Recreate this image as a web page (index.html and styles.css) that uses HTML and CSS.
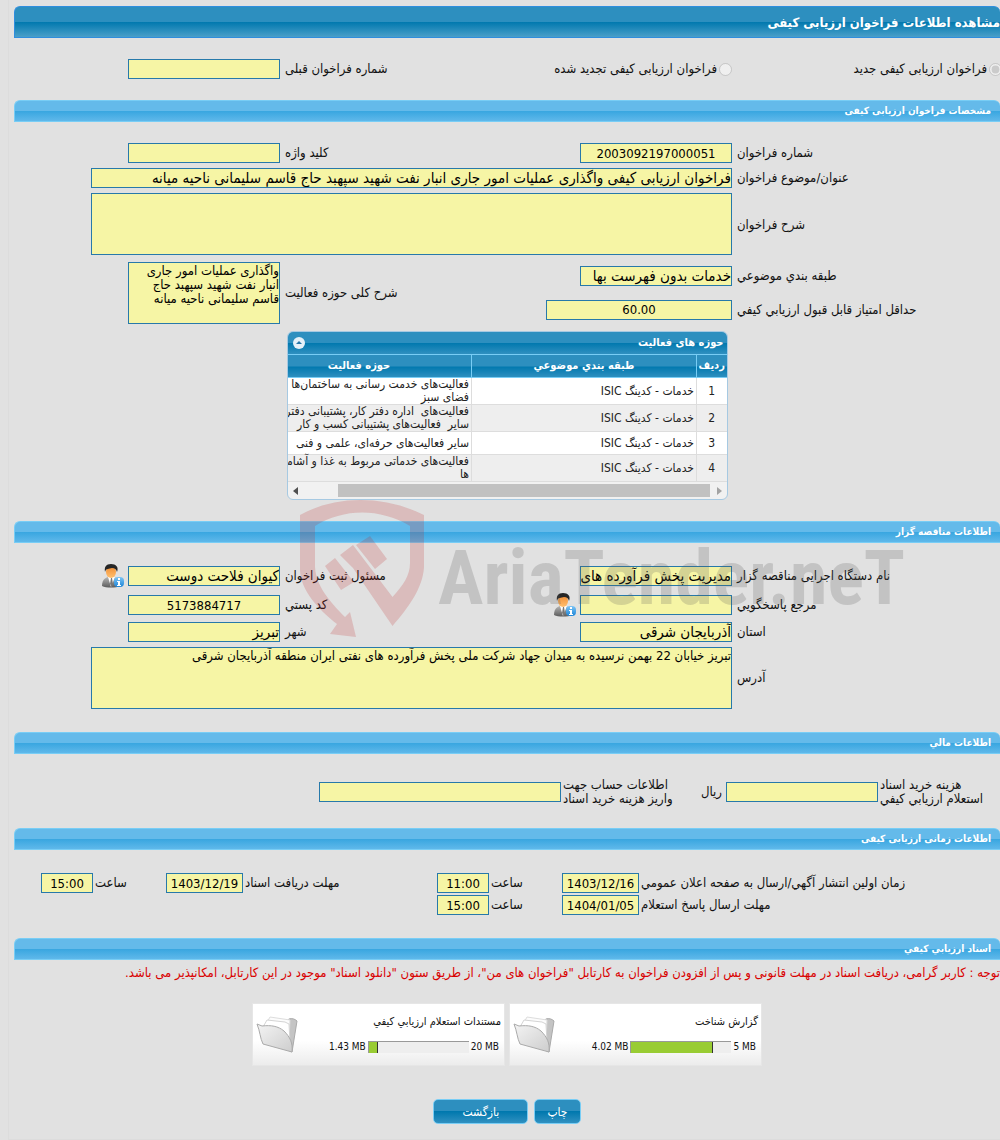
FILE: index.html
```
<!DOCTYPE html>
<html lang="fa" dir="rtl">
<head>
    <meta charset="UTF-8">
    <title>مشاهده اطلاعات فراخوان ارزیابی کیفی</title>
    <link rel="stylesheet" href="styles.css">
</head>
<body>
    <!-- shared icons -->
    <svg class="sprite" aria-hidden="true">
        <defs>
            <linearGradient id="skin" x1="0" y1="0" x2="0" y2="1">
                <stop offset="0" stop-color="#f08a30"/>
                <stop offset="1" stop-color="#ffc070"/>
            </linearGradient>
            <linearGradient id="suit" x1="0" y1="0" x2="0" y2="1">
                <stop offset="0" stop-color="#b5b5b5"/>
                <stop offset="1" stop-color="#5c5c5c"/>
            </linearGradient>
            <linearGradient id="info" x1="0" y1="0" x2="0" y2="1">
                <stop offset="0" stop-color="#7cc4f5"/>
                <stop offset="1" stop-color="#1e86d8"/>
            </linearGradient>
            <linearGradient id="paper" x1="0" y1="0" x2="1" y2="1">
                <stop offset="0" stop-color="#f4f4f4"/>
                <stop offset="1" stop-color="#cdcdcd"/>
            </linearGradient>
        </defs>
        <symbol id="person" viewBox="0 0 22 24">
            <path d="M0 22c0-5 2-8 6-9h6c4 1 6 4 6 9-4 2-14 2-18 0z" fill="url(#suit)"/>
            <path d="M6 13l3 10 4-10z" fill="#fff"/>
            <path d="M9 14l-1 6 2 3 1-3-1-6z" fill="#777"/>
            <ellipse cx="9" cy="8" rx="5" ry="6" fill="url(#skin)"/>
            <path d="M3 8c-1-5 1-8 6-8s8 3 6 8c-1-3-2-4-5-4-3 1-6 0-7 4z" fill="#262626"/>
            <rect x="12" y="13" width="10" height="10" rx="4" fill="url(#info)"/>
            <path d="M16 14h2v2h-2zM15 17h3v4h1v1h-4v-1h1v-3h-1z" fill="#fff"/>
        </symbol>
        <symbol id="folder" viewBox="0 0 42 38">
            <path d="M28 7l5-4c3-1 6 0 8 2l-5 31-4-2z" fill="#c4c4c4" stroke="#aaa"/>
            <path d="M9 10l5-9 20 3-1 20-6 2z" fill="#fcfcfc" stroke="#ddd"/>
            <path d="M7 11l4-7 18 2 4 2 1 18z" fill="#fff" stroke="#d4d4d4"/>
            <path d="M1 8l5 2c9-1 16 0 22 5 6 6 9 12 8 21L7 28C4 22 4 15 1 8z" fill="url(#paper)" stroke="#aaa"/>
        </symbol>
    </svg>

    <main class="page">
        <h1 class="title-bar">مشاهده اطلاعات فراخوان ارزیابی کیفی</h1>

        <div class="form-grid">
            <label class="radio first-radio"><input type="radio" name="kind" checked disabled>فراخوان ارزیابی کیفی جدید</label>
            <label class="radio wide-radio"><input type="radio" name="kind" disabled>فراخوان ارزیابی کیفی تجدید شده</label>
            <label class="lbl col-3" for="prevNo">شماره فراخوان قبلی</label>
            <input type="text" id="prevNo" readonly>
        </div>

        <h2 class="section-bar">مشخصات فراخوان ارزیابی کیفی</h2>
        <div class="form-grid specs">
            <label class="lbl" for="callNo">شماره فراخوان</label>
            <input type="text" id="callNo" class="num" value="2003092197000051" readonly>
            <label class="lbl" for="keyword">کلید واژه</label>
            <input type="text" id="keyword" readonly>

            <label class="lbl col-1" for="subject">عنوان/موضوع فراخوان</label>
            <input type="text" id="subject" class="full" value="فراخوان ارزیابی کیفی واگذاری عملیات امور جاری انبار نفت شهید سپهبد حاج قاسم سلیمانی ناحیه میانه" readonly>

            <label class="lbl col-1" for="descr">شرح فراخوان</label>
            <textarea id="descr" class="full descr" readonly></textarea>

            <label class="lbl col-1" for="category">طبقه بندي موضوعي</label>
            <input type="text" id="category" value="خدمات بدون فهرست بها" readonly>
            <label class="lbl two-rows" for="scope">شرح کلی حوزه فعالیت</label>
            <textarea id="scope" class="two-rows" readonly>واگذاری عملیات امور جاری انبار نفت شهید سپهبد حاج قاسم سلیمانی ناحیه میانه</textarea>

            <label class="lbl col-1" for="minScore">حداقل امتیاز قابل قبول ارزیابي کیفي</label>
            <input type="text" id="minScore" class="num score" value="60.00" readonly>
        </div>

        <!-- activity fields -->
        <section class="panel">
            <header class="panel-title">
                <span>حوزه های فعالیت</span>
                <button type="button" class="collapse" aria-label="بستن">
                    <svg viewBox="0 0 12 12"><circle cx="6" cy="6" r="6" fill="#e4f0f8"/><path d="M3 7l3-3 3 3z" fill="#2475a8"/></svg>
                </button>
            </header>
            <div class="panel-body">
                <table>
                    <thead>
                        <tr><th class="c-no">ردیف</th><th class="c-cat">طبقه بندي موضوعي</th><th class="c-field">حوزه فعالیت</th></tr>
                    </thead>
                    <tbody>
                        <tr><td class="c-no">1</td><td>خدمات - کدینگ ISIC</td><td>فعالیت‌های خدمت رسانی به ساختمان‌ها و<br>فضای سبز</td></tr>
                        <tr><td class="c-no">2</td><td>خدمات - کدینگ ISIC</td><td>فعالیت‌های &nbsp;اداره دفتر کار، پشتیبانی دفتر و<br>سایر &nbsp;فعالیت‌های پشتیبانی کسب و کار</td></tr>
                        <tr><td class="c-no">3</td><td>خدمات - کدینگ ISIC</td><td>سایر فعالیت‌های حرفه‌ای، علمی و فنی</td></tr>
                        <tr><td class="c-no">4</td><td>خدمات - کدینگ ISIC</td><td>فعالیت‌های خدماتی مربوط به غذا و آشامیدنی<br>ها</td></tr>
                    </tbody>
                </table>
            </div>
            <div class="scrollbar">
                <svg viewBox="0 0 5 8"><path d="M0 0l5 4-5 4z" fill="#a3a3a3"/></svg>
                <span class="thumb"></span>
                <svg viewBox="0 0 5 8"><path d="M5 0L0 4l5 4z" fill="#505050"/></svg>
            </div>
        </section>

        <h2 class="section-bar">اطلاعات مناقصه گزار</h2>
        <div class="form-grid owner">
            <label class="lbl" for="agency">نام دستگاه اجرایی مناقصه گزار</label>
            <input type="text" id="agency" value="مدیریت پخش فرآورده های نفتی منطقه" readonly>
            <label class="lbl" for="registrar">مسئول ثبت فراخوان</label>
            <input type="text" id="registrar" value="کیوان فلاحت دوست" readonly>
            <svg class="person"><use href="#person"/></svg>

            <label class="lbl col-1" for="contact">مرجع پاسخگويي</label>
            <input type="text" id="contact" readonly>
            <div class="with-icon">
                <svg class="person"><use href="#person"/></svg>
                <label class="lbl" for="postal">کد پستي</label>
            </div>
            <input type="text" id="postal" class="num" value="5173884717" readonly>

            <label class="lbl col-1" for="province">استان</label>
            <input type="text" id="province" value="آذربایجان شرقی" readonly>
            <label class="lbl" for="city">شهر</label>
            <input type="text" id="city" value="تبریز" readonly>

            <label class="lbl col-1" for="address">آدرس</label>
            <textarea id="address" class="full" readonly>تبریز خیابان 22 بهمن نرسیده به میدان جهاد شرکت ملی پخش فرآورده های نفتی ایران منطقه آذربایجان شرقی</textarea>

            <!-- site watermark -->
            <svg class="watermark" viewBox="0 0 610 140" aria-hidden="true">
                <g class="wm-shield">
                    <path fill-rule="evenodd" d="M4 15C40-5 88-5 128 15V67C127 88 112 108 96.500 126L57 68 44 55 57 45 96.500 97C107 85 114 76 114 63V26C84 8 48 8 19 26V67C20 86 34 102 49 117L54 112 60 137 34 134 41 124C22 109 5 91 4 70Z"/>
                    <path d="M29 66l10-8 19 24-13 8zM60 45l14-9 17 23-12 10z"/>
                </g>
                <text class="wm-text" direction="ltr" x="142" y="104">AriaTender.neT</text>
            </svg>
        </div>

        <h2 class="section-bar">اطلاعات مالي</h2>
        <div class="money-row">
            <label class="money-lbl" for="price">هزينه خرید اسناد<br>استعلام ارزيابي کيفي</label>
            <input type="text" id="price" readonly>
            <span class="unit">ریال</span>
            <label class="money-lbl" for="account">اطلاعات حساب جهت<br>واریز هزینه خرید اسناد</label>
            <input type="text" id="account" class="account" readonly>
        </div>

        <h2 class="section-bar">اطلاعات زمانی ارزیابی کیفی</h2>
        <div class="time-grid">
            <label class="lbl" for="pubDate">زمان اولین انتشار آگهي/ارسال به صفحه اعلان عمومي</label>
            <input type="text" id="pubDate" class="num" value="1403/12/16" readonly>
            <label class="lbl" for="pubTime">ساعت</label>
            <input type="text" id="pubTime" class="num" value="11:00" readonly>
            <label class="lbl" for="docDate">مهلت دریافت اسناد</label>
            <input type="text" id="docDate" class="num" value="1403/12/19" readonly>
            <label class="lbl" for="docTime">ساعت</label>
            <input type="text" id="docTime" class="num" value="15:00" readonly>

            <label class="lbl col-1" for="replyDate">مهلت ارسال پاسخ استعلام</label>
            <input type="text" id="replyDate" class="num" value="1404/01/05" readonly>
            <label class="lbl" for="replyTime">ساعت</label>
            <input type="text" id="replyTime" class="num" value="15:00" readonly>
        </div>

        <h2 class="section-bar">اسناد ارزيابي كيفي</h2>
        <p class="notice">توجه : کاربر گرامی، دریافت اسناد در مهلت قانونی و پس از افزودن فراخوان به کارتابل "فراخوان های من"، از طریق ستون "دانلود اسناد" موجود در این کارتابل، امکانپذیر می باشد.</p>

        <div class="files">
            <article class="file">
                <div class="file-info">
                    <span class="file-name">گزارش شناخت</span>
                    <div class="quota"><span dir="ltr">5 MB</span><div class="track"><div class="fill" style="width: 82%"></div></div><span dir="ltr">4.02 MB</span></div>
                </div>
                <svg class="folder"><use href="#folder"/></svg>
            </article>
            <article class="file">
                <div class="file-info">
                    <span class="file-name">مستندات استعلام ارزيابي کيفي</span>
                    <div class="quota"><span dir="ltr">20 MB</span><div class="track"><div class="fill" style="width: 9%"></div></div><span dir="ltr">1.43 MB</span></div>
                </div>
                <svg class="folder"><use href="#folder"/></svg>
            </article>
        </div>

        <div class="actions">
            <button type="button" class="btn">چاپ</button>
            <button type="button" class="btn back">بازگشت</button>
        </div>
    </main>
</body>
</html>
```
FILE: styles.css
```
* {
    box-sizing: border-box;
}

body {
    margin: 0;
    background: #e1e1e1;
    color: #111;
    font-family: "DejaVu Sans Condensed", "DejaVu Sans", sans-serif;
    font-size: 13px;
    line-height: 14px;
    overflow-x: hidden;
}

.sprite {
    position: absolute;
    width: 0;
    height: 0;
}

.page {
    margin-left: 8px;
    padding: 6px 0 15px 5px;
    border: 1px solid #dcdcdc;
    border-width: 0 0 1px 1px;
}

/* bars */
.title-bar,
.section-bar {
    margin: 0;
    color: #fff;
    font-weight: bold;
}
.title-bar {
    height: 32px;
    line-height: 31px;
    font-size: 13px;
    border: 1px solid #2f8ede;
    border-width: 1px 0 1px 1px;
    border-radius: 6px 6px 0 0;
    background: linear-gradient(#2d8fbf 50%, #0078ae 50%, #4a9fc9);
}
.section-bar {
    height: 22px;
    line-height: 20px;
    padding-right: 9px;
    font-size: 10px;
    border: 1px solid #78cdf5;
    border-width: 1px 0 1px 1px;
    border-radius: 6px 6px 0 0;
    background: linear-gradient(#64baea 50%, #38a6e0 50%, #5fb8ea);
}

/* fields */
input[type="text"],
textarea {
    display: block;
    width: 100%;
    margin: 0;
    border: 1px solid #2779aa;
    border-radius: 0;
    background: #f6f5a5;
    color: #000;
    font-family: inherit;
    outline: none;
}
input[type="text"] {
    height: 20px;
    padding: 0;
    font-size: 15px;
}
textarea {
    height: 62px;
    padding: 1px 0;
    font-size: 13px;
    line-height: 14px;
    resize: none;
    overflow: hidden;
}
input[type="text"].num {
    direction: ltr;
    text-align: center;
    font-size: 13px;
}
.lbl {
    padding-left: 5px;
    text-align: left;
}

.form-grid {
    position: relative;
    display: grid;
    grid-template-columns: 268px 152px minmax(0, 1fr) 152px 114px;
    align-items: center;
    row-gap: 5px;
    padding: 21px 0;
}
.col-1 {
    grid-column: 1;
}
.col-3 {
    grid-column: 3;
    grid-row: 1;
}
.full {
    grid-column: 2 / 6;
}
input.full,
textarea.full {
    width: calc(100% - 77px);
}
.descr {
    margin-bottom: 2px;
}
.two-rows {
    grid-row: span 2;
}
.specs {
    padding-bottom: 7px;
}
.owner {
    padding-bottom: 23px;
}
input.score {
    width: 186px;
}

.radio {
    display: flex;
    align-items: center;
    gap: 2px;
}
.radio input {
    width: 13px;
    height: 13px;
    margin: 0;
}
.first-radio {
    margin-right: -2px;
}
.wide-radio {
    grid-column: 2 / 4;
    grid-row: 1;
}

.person {
    width: 22px;
    height: 24px;
    margin-right: 4px;
}
.with-icon {
    display: flex;
    align-items: center;
    justify-content: space-between;
}

/* activity panel */
.panel {
    width: 441px;
    margin: 0 auto 21px;
    border: 1px solid #a6c9e2;
    border-radius: 6px;
    background: #f1f1f1;
    overflow: hidden;
}
.panel-title {
    display: flex;
    align-items: center;
    justify-content: space-between;
    height: 22px;
    padding: 0 3px 0 5px;
    color: #fff;
    font-size: 11px;
    font-weight: bold;
    background: linear-gradient(#2d8fbf 50%, #0078ae 50%, #3090c0);
}
.collapse {
    width: 12px;
    height: 12px;
    padding: 0;
    border: 0;
    background: none;
}
.collapse svg {
    display: block;
}
.panel-body {
    overflow: hidden;
}
table {
    width: 480px;
    table-layout: fixed;
    border-collapse: collapse;
    font-size: 12px;
}
th {
    height: 23px;
    padding: 0;
    color: #fff;
    font-size: 11px;
    background: linear-gradient(#2d8fbf 50%, #0078ae 50%, #3090c0);
    border: 1px solid #78cdf5;
    border-width: 1px 0 1px 1px;
}
td {
    height: 27px;
    padding: 0 2px;
    line-height: 13px;
    color: #222;
    white-space: nowrap;
    background: #fff;
    border: 1px solid #ddd;
    border-width: 0 0 1px 1px;
}
tbody tr:nth-child(3) td {
    height: 23px;
}
tbody tr:nth-child(even) td {
    background: #eee;
}
.c-no {
    width: 30px;
    text-align: center;
}
.c-cat,
.c-field {
    width: 225px;
}
.scrollbar {
    display: flex;
    align-items: center;
    gap: 7px;
    height: 17px;
    padding: 0 5px;
}
.scrollbar svg {
    width: 5px;
    height: 8px;
}
.thumb {
    height: 13px;
    flex: 1;
    margin-left: 33px;
    background: #c1c1c1;
}

/* watermark over the owner section */
.watermark {
    position: absolute;
    left: 282px;
    top: -43px;
    width: 610px;
    height: 140px;
    pointer-events: none;
}
.wm-shield {
    fill: rgba(190, 40, 40, 0.2);
}
.wm-text {
    font: bold 76px "Liberation Sans Narrow", "Roboto Condensed", "DejaVu Sans Condensed", sans-serif;
    fill: rgba(90, 90, 90, 0.22);
}

/* financial */
.money-row {
    display: flex;
    align-items: center;
    padding: 24px 10px 22px 0;
}
.money-lbl {
    width: 112px;
    padding-left: 2px;
    text-align: left;
    white-space: nowrap;
}
.money-row input[type="text"] {
    width: 152px;
}
.unit {
    margin: 0 4px 0 28px;
}
.money-row input[type="text"].account {
    width: 242px;
}

/* dates */
.time-grid {
    display: grid;
    grid-template-columns: minmax(0, 361fr) 77px 73px 52px minmax(0, 194fr) 77px 73px 52px 27px;
    align-items: center;
    row-gap: 2px;
    padding: 23px 0;
}
.time-grid .lbl {
    padding-left: 2px;
}

/* documents */
.notice {
    margin: 6px 0 23px;
    color: #d90000;
    white-space: nowrap;
}
.files {
    display: flex;
    justify-content: center;
    gap: 4px;
}
.file {
    display: flex;
    align-items: center;
    justify-content: space-between;
    width: 253px;
    height: 63px;
    padding: 0 3px;
    font-size: 10px;
    border: 1px solid #e6e6e6;
    background: linear-gradient(#fff 60%, #ececec);
}
.file-info {
    display: flex;
    flex-direction: column;
    gap: 11px;
}
.file-name {
    font-size: 11px;
}
.quota {
    display: flex;
    align-items: center;
    gap: 2px;
    padding-right: 2px;
}
.track {
    width: 101px;
    height: 12px;
    direction: ltr;
    background: #eee;
    border: 1px solid #999;
    border-width: 1px 0 0 1px;
}
.fill {
    height: 100%;
    background: #9c3;
    border-right: 1px solid #333;
}
.folder {
    width: 42px;
    height: 38px;
}

.actions {
    display: flex;
    justify-content: center;
    gap: 6px;
    margin-top: 33px;
}
.btn {
    height: 25px;
    padding: 0 12px;
    color: #fff;
    font-family: inherit;
    font-size: 12px;
    border: 1px solid #78cdf5;
    border-radius: 5px;
    background: linear-gradient(#2d8fbf 50%, #0078ae 50%, #3090c0);
}
.back {
    padding: 0 28px;
}
```
